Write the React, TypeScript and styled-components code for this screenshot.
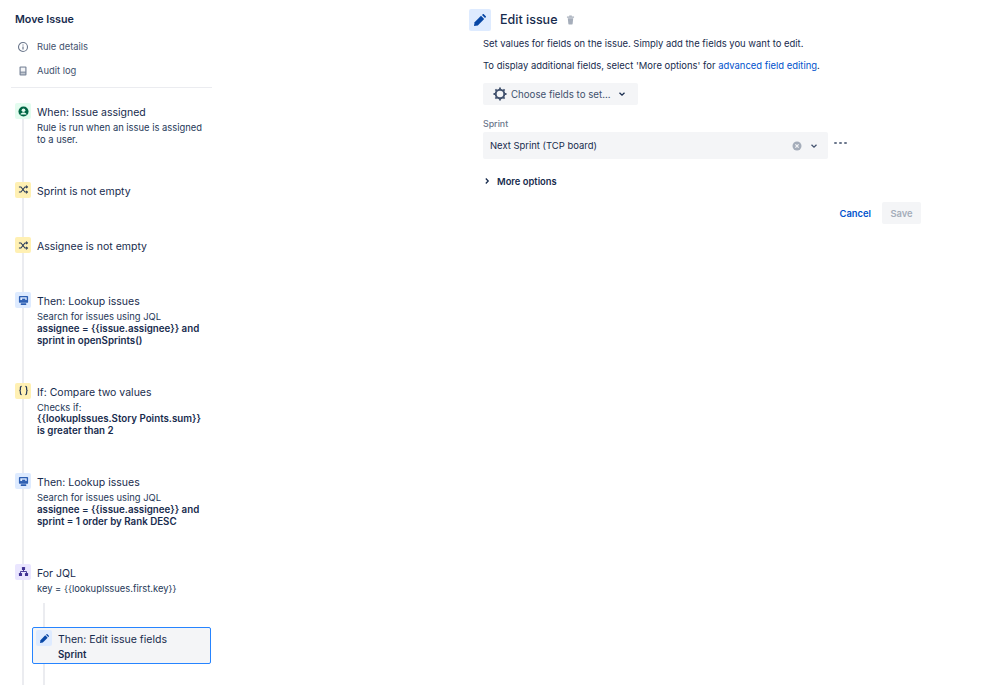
import React from 'react'
import styled, { createGlobalStyle } from 'styled-components'

const GlobalStyle = createGlobalStyle`
  html, body {
    margin: 0;
    background: #fff;
  }
  body {
    font-family: Inter, "Liberation Sans", sans-serif;
    color: #172b4d;
    -webkit-font-smoothing: antialiased;
  }
`

const Colors = {
  text: '#172b4d',
  subtle: '#42526e',
  label: '#6b778c',
  line: '#ebecf0',
  field: '#f4f5f7',
  blue: '#0052cc',
}

type Tone = 'green' | 'yellow' | 'blue' | 'purple'

const toneColors: Record<Tone, { bg: string; fg: string }> = {
  green: { bg: '#e3fcef', fg: '#006644' },
  yellow: { bg: '#fff0b3', fg: '#253858' },
  blue: { bg: '#deebff', fg: '#0747a6' },
  purple: { bg: '#eae6ff', fg: '#403294' },
}

const UserIcon = () => (
  <svg width="11" height="11" viewBox="0 0 12 12">
    <circle cx="6" cy="6" r="5.5" fill="currentColor" />
    <circle cx="6" cy="4.6" r="2" fill="#e3fcef" />
    <path d="M2.6 9.2c.6-1.5 1.900-2.200 3.400-2.200s2.800.7 3.400 2.200" fill="#e3fcef" />
  </svg>
)

const ShuffleIcon = () => (
  <svg width="11" height="11" viewBox="0 0 12 12" fill="none" stroke="currentColor" strokeWidth="1.100">
    <path d="M1 3.200h2.200l4.400 5.600H10" />
    <path d="M1 8.800h2.200l4.400-5.600H10" />
    <path d="M8.800 1.800 10.300 3.200 8.800 4.600M8.800 7.400 10.300 8.800 8.800 10.200" />
  </svg>
)

const LookupIcon = () => (
  <svg width="11" height="11" viewBox="0 0 12 12">
    <rect x="1" y="1" width="10" height="7.500" rx="1" fill="#2d5fb3" />
    <rect x="2.500" y="2.500" width="7" height="3" fill="#deebff" />
    <rect x="4.500" y="4" width="3.500" height="1.500" fill="#2d5fb3" />
    <rect x="3" y="9" width="6" height="2" rx=".5" fill="#2d5fb3" />
  </svg>
)

const BracesIcon = () => (
  <svg width="11" height="11" viewBox="0 0 12 12" fill="none" stroke="currentColor" strokeWidth="1.300">
    <path d="M4 1.500c-1.200 0-1.400.6-1.400 1.500v1.500c0 .8-.3 1.500-1.100 1.500.8 0 1.100.7 1.100 1.500V9c0 .9.2 1.500 1.400 1.500" />
    <path d="M8 1.500c1.200 0 1.400.6 1.400 1.500v1.500c0 .8.3 1.500 1.100 1.500-.8 0-1.100.7-1.100 1.500V9c0 .9-.2 1.500-1.400 1.500" />
  </svg>
)

const BranchIcon = () => (
  <svg width="11" height="11" viewBox="0 0 12 12" fill="none">
    <rect x="4.300" y="1" width="3.400" height="3.400" rx=".6" fill="currentColor" />
    <rect x="1" y="7.600" width="3.400" height="3.400" rx=".6" fill="currentColor" />
    <rect x="7.600" y="7.600" width="3.400" height="3.400" rx=".6" fill="currentColor" />
    <path d="M6 4v2M2.700 8V6h6.600v2" stroke="currentColor" strokeWidth="1" />
  </svg>
)

const PencilIcon = ({ size = 12 }: { size?: number }) => (
  <svg width={size} height={size} viewBox="0 0 12 12">
    <path d="M.6 8.200 7 1.800l3.200 3.200-6.400 6.400-3.800.6z" fill="currentColor" />
    <path d="M8 .9 8.800.2c.3-.3.700-.3 1 0l2 2c.3.3.3.7 0 1l-.8.8z" fill="currentColor" />
  </svg>
)

const InfoIcon = () => (
  <svg width="12" height="12" viewBox="0 0 12 12" fill="none" stroke="#6b778c">
    <circle cx="6" cy="6" r="4.500" strokeWidth="1.100" />
    <path d="M6 5.500v3" strokeWidth="1.200" />
    <path d="M6 3.400v1" strokeWidth="1.200" />
  </svg>
)

const LogIcon = () => (
  <svg width="12" height="12" viewBox="0 0 12 12">
    <rect x="2.500" y="1.500" width="7" height="9" rx="1" fill="#7a869a" />
    <rect x="3.700" y="2.600" width="4.600" height="4" fill="#f4f5f7" />
    <rect x="3.700" y="7.600" width="4.600" height="1.800" fill="#c1c7d0" />
  </svg>
)

const TrashIcon = () => (
  <svg width="9" height="10" viewBox="0 0 10 10" fill="#a5adba">
    <rect x="1" y="1" width="8" height="1.400" rx=".4" />
    <rect x="3.500" y="0" width="3" height="1.500" rx=".4" />
    <path d="M2 3h6l-.6 6.300c0 .4-.3.700-.7.700H3.300c-.4 0-.7-.3-.7-.7z" />
  </svg>
)

const GearIcon = () => (
  <svg width="14" height="14" viewBox="0 0 14 14" fill="none" stroke="#42526e">
    <circle cx="7" cy="7" r="4.300" strokeWidth="2" />
    <path
      d="M7 .5v2M7 11.500v2M.5 7h2M11.500 7h2M2.400 2.400l1.400 1.400M10.200 10.200l1.400 1.400M2.400 11.600l1.400-1.400M10.200 3.800l1.400-1.400"
      strokeWidth="1.800"
    />
  </svg>
)

const Chevron = ({ direction = 'down' }: { direction?: 'down' | 'right' }) => (
  <svg width="8" height="8" viewBox="0 0 8 8" fill="none" stroke="currentColor" strokeWidth="1.300">
    <path d={direction === 'down' ? 'M1.500 2.800 4 5.200l2.500-2.400' : 'M2.800 1.500 5.200 4 2.800 6.500'} />
  </svg>
)

const ClearIcon = () => (
  <svg width="10" height="10" viewBox="0 0 10 10">
    <circle cx="5" cy="5" r="4.500" fill="#a5adba" />
    <path d="M3.400 3.400 6.600 6.600M6.600 3.400 3.400 6.600" stroke="#f4f5f7" strokeWidth="1.200" />
  </svg>
)

const Page = styled.div`
  display: flex;
  height: 685px;
  overflow: hidden;
`

const Sidebar = styled.aside`
  display: flex;
  flex-direction: column;
  box-sizing: border-box;
  width: 212px;
`

const Heading = styled.h1`
  margin: 13px 0 0 15px;
  font-size: 10.700px;
  line-height: 13px;
  font-weight: 600;
  color: ${Colors.text};
`

const NavList = styled.nav`
  display: flex;
  flex-direction: column;
  gap: 9px;
  margin: 13px 0 0 17px;
`

const NavItem = styled.div`
  display: flex;
  align-items: center;
  gap: 8px;
  height: 15px;
  font-size: 9.400px;
  color: ${Colors.subtle};
`

const Divider = styled.hr`
  flex: none;
  width: 201px;
  margin: 9px 0 15px 11px;
  border: 0;
  border-top: 1px solid ${Colors.line};
`

const Timeline = styled.div`
  flex: 1;
  display: flex;
  flex-direction: column;
  margin-left: 22px;
  border-left: 2px solid ${Colors.line};
`

const Step = styled.div`
  display: flex;
  gap: 6px;
  margin-left: -9px;
  margin-bottom: 36.300px;
`

const IconBadge = styled.span<{ $tone: Tone; $size?: number }>`
  flex: none;
  display: flex;
  align-items: center;
  justify-content: center;
  width: ${(p) => p.$size ?? 16}px;
  height: ${(p) => p.$size ?? 16}px;
  border-radius: 2px;
  background: ${(p) => toneColors[p.$tone].bg};
  color: ${(p) => toneColors[p.$tone].fg};
`

const StepBody = styled.div`
  width: 172px;
  padding-top: 1px;
`

const StepTitle = styled.div`
  font-size: 10.500px;
  line-height: 18px;
  color: ${Colors.text};
`

const StepText = styled.div`
  font-size: 9.400px;
  line-height: 11.700px;
  color: #253858;
`

const StepCode = styled.div`
  font-size: 9.750px;
  line-height: 11.700px;
  font-weight: 600;
  color: ${Colors.text};
`

const NestedLine = styled.div`
  flex: 1;
  margin: -27.500px 0 0 19px;
  padding-top: 24px;
  border-left: 2px solid ${Colors.line};
`

const SelectedStep = styled.div`
  display: flex;
  gap: 6px;
  box-sizing: border-box;
  width: 179px;
  height: 37px;
  margin-left: -13px;
  padding: 2px 3px;
  background: ${Colors.field};
  border: 1px solid #2684ff;
  border-radius: 2px;
`

const Main = styled.main`
  display: flex;
  flex-direction: column;
  width: 452px;
  margin-left: 257px;
  padding-top: 9px;
`

const Header = styled.header`
  display: flex;
  align-items: center;
  height: 22px;
`

const HeaderTitle = styled.h2`
  margin: 0 9px 0 9px;
  font-size: 12.500px;
  line-height: 22px;
  font-weight: 500;
  color: ${Colors.text};
`

const Form = styled.div`
  display: flex;
  flex-direction: column;
  padding-left: 14px;
`

const Paragraph = styled.p`
  margin: 7px 0 0;
  font-size: 9.450px;
  line-height: 12px;
  color: ${Colors.text};

  & + & {
    margin-top: 10px;
  }
`

const Link = styled.a`
  color: ${Colors.blue};
  text-decoration: none;
`

const ChooseButton = styled.div`
  display: flex;
  align-items: center;
  align-self: flex-start;
  box-sizing: border-box;
  width: 155px;
  height: 22px;
  margin-top: 11px;
  padding-left: 10px;
  gap: 4px;
  background: ${Colors.field};
  border-radius: 2px;
  font-size: 9.700px;
  color: ${Colors.subtle};
`

const ChooseArrow = styled.span`
  display: flex;
  margin-left: 3px;
  color: ${Colors.text};
`

const FieldLabel = styled.label`
  margin-top: 13px;
  font-size: 8.800px;
  line-height: 12px;
  font-weight: 500;
  color: ${Colors.label};
`

const FieldRow = styled.div`
  display: flex;
  margin-top: 2px;
`

const SelectBox = styled.div`
  display: flex;
  align-items: center;
  box-sizing: border-box;
  width: 345px;
  height: 27px;
  padding: 0 10px 0 7px;
  background: ${Colors.field};
  border-radius: 2px;
  font-size: 9.450px;
  color: ${Colors.text};
`

const SelectValue = styled.span`
  flex: 1;
`

const SelectArrow = styled.span`
  display: flex;
  margin-left: 8px;
  color: ${Colors.subtle};
`

const Dots = styled.span`
  display: flex;
  gap: 2.500px;
  margin: 9.500px 0 0 6px;
`

const Dot = styled.i`
  width: 2.500px;
  height: 2.500px;
  border-radius: 50%;
  background: ${Colors.label};
`

const MoreOptions = styled.div`
  display: flex;
  align-items: center;
  gap: 6px;
  margin-top: 15px;
  height: 14px;
  font-size: 9.400px;
  font-weight: 600;
  color: ${Colors.text};
`

const Footer = styled.div`
  display: flex;
  align-items: center;
  justify-content: flex-end;
  gap: 11px;
  margin-top: 14px;
`

const CancelButton = styled.a`
  font-size: 9.400px;
  font-weight: 600;
  color: ${Colors.blue};
`

const SaveButton = styled.div`
  display: flex;
  align-items: center;
  justify-content: center;
  width: 39px;
  height: 22px;
  background: ${Colors.field};
  border-radius: 2px;
  font-size: 9.400px;
  font-weight: 600;
  color: #a5adba;
`

export default function App() {
  return (
    <Page>
      <GlobalStyle />
      <Sidebar>
        <Heading>Move Issue</Heading>
        <NavList>
          <NavItem>
            <InfoIcon />
            Rule details
          </NavItem>
          <NavItem>
            <LogIcon />
            Audit log
          </NavItem>
        </NavList>
        <Divider />
        <Timeline>
          <Step>
            <IconBadge $tone="green">
              <UserIcon />
            </IconBadge>
            <StepBody>
              <StepTitle>When: Issue assigned</StepTitle>
              <StepText>Rule is run when an issue is assigned to a user.</StepText>
            </StepBody>
          </Step>
          <Step>
            <IconBadge $tone="yellow">
              <ShuffleIcon />
            </IconBadge>
            <StepBody>
              <StepTitle>Sprint is not empty</StepTitle>
            </StepBody>
          </Step>
          <Step>
            <IconBadge $tone="yellow">
              <ShuffleIcon />
            </IconBadge>
            <StepBody>
              <StepTitle>Assignee is not empty</StepTitle>
            </StepBody>
          </Step>
          <Step>
            <IconBadge $tone="blue">
              <LookupIcon />
            </IconBadge>
            <StepBody>
              <StepTitle>Then: Lookup issues</StepTitle>
              <StepText>Search for issues using JQL</StepText>
              <StepCode>
                assignee = {'{{issue.assignee}}'} and
                <br />
                sprint in openSprints()
              </StepCode>
            </StepBody>
          </Step>
          <Step>
            <IconBadge $tone="yellow">
              <BracesIcon />
            </IconBadge>
            <StepBody>
              <StepTitle>If: Compare two values</StepTitle>
              <StepText>Checks if:</StepText>
              <StepCode>
                {'{{lookupIssues.Story Points.sum}}'}
                <br />
                is greater than 2
              </StepCode>
            </StepBody>
          </Step>
          <Step>
            <IconBadge $tone="blue">
              <LookupIcon />
            </IconBadge>
            <StepBody>
              <StepTitle>Then: Lookup issues</StepTitle>
              <StepText>Search for issues using JQL</StepText>
              <StepCode>
                assignee = {'{{issue.assignee}}'} and
                <br />
                sprint = 1 order by Rank DESC
              </StepCode>
            </StepBody>
          </Step>
          <Step>
            <IconBadge $tone="purple">
              <BranchIcon />
            </IconBadge>
            <StepBody>
              <StepTitle>For JQL</StepTitle>
              <StepText>key = {'{{lookupIssues.first.key}}'}</StepText>
            </StepBody>
          </Step>
          <NestedLine>
            <SelectedStep>
              <IconBadge $tone="blue">
                <PencilIcon size={9} />
              </IconBadge>
              <StepBody>
                <StepTitle>Then: Edit issue fields</StepTitle>
                <StepCode>Sprint</StepCode>
              </StepBody>
            </SelectedStep>
          </NestedLine>
        </Timeline>
      </Sidebar>
      <Main>
        <Header>
          <IconBadge $tone="blue" $size={22}>
            <PencilIcon />
          </IconBadge>
          <HeaderTitle>Edit issue</HeaderTitle>
          <TrashIcon />
        </Header>
        <Form>
          <Paragraph>Set values for fields on the issue. Simply add the fields you want to edit.</Paragraph>
          <Paragraph>
            To display additional fields, select 'More options' for <Link>advanced field editing</Link>.
          </Paragraph>
          <ChooseButton>
            <GearIcon />
            Choose fields to set...
            <ChooseArrow>
              <Chevron />
            </ChooseArrow>
          </ChooseButton>
          <FieldLabel>Sprint</FieldLabel>
          <FieldRow>
            <SelectBox>
              <SelectValue>Next Sprint (TCP board)</SelectValue>
              <ClearIcon />
              <SelectArrow>
                <Chevron />
              </SelectArrow>
            </SelectBox>
            <Dots>
              <Dot />
              <Dot />
              <Dot />
            </Dots>
          </FieldRow>
          <MoreOptions>
            <Chevron direction="right" />
            More options
          </MoreOptions>
          <Footer>
            <CancelButton>Cancel</CancelButton>
            <SaveButton>Save</SaveButton>
          </Footer>
        </Form>
      </Main>
    </Page>
  )
}
